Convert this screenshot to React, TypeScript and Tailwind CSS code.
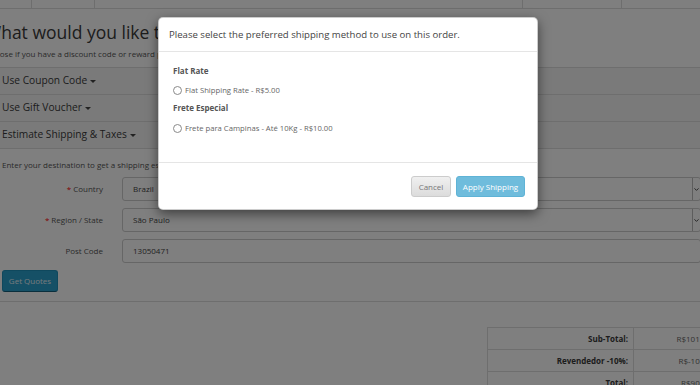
import { ChevronDown } from "lucide-react"

const topCells = [47, 63, 428, 99]

const panels = ["Use Coupon Code", "Use Gift Voucher", "Estimate Shipping & Taxes"]

const fields = [
  { label: "Country", required: true, value: "Brazil", select: true },
  { label: "Region / State", required: true, value: "São Paulo", select: true },
  { label: "Post Code", required: false, value: "13050471", select: false },
]

const totals = [
  { label: "Sub-Total:", value: "R$101.00" },
  { label: "Revendedor -10%:", value: "R$-10.10" },
  { label: "Total:", value: "R$90.90" },
]

const Caret = () => (
  <span className="ml-[3px] inline-block h-0 w-0 border-x-[3px] border-t-[3px] border-x-transparent border-t-[#444] align-middle" />
)

function Radio({ label }: { label: string }) {
  return (
    <label className="flex items-center gap-[3px] text-[7.7px] leading-[12px] text-[#666]">
      <span className="h-[9px] w-[9px] rounded-full border border-[#8a8a8a] bg-white" />
      {label}
    </label>
  )
}

export default function App() {
  return (
    <div className="relative h-[385px] w-[700px] overflow-hidden bg-white font-['Open_Sans',sans-serif] text-[#666]">
      <div className="-ml-[15px] w-[738px]">
        <div className="flex h-[9px] border-b border-[#ddd]">
          {topCells.map((w, i) => (
            <div key={i} style={{ width: w }} className="border-r border-[#ddd]" />
          ))}
        </div>

        <h2 className="mt-[13px] text-[17.5px] leading-[20px] text-[#3a3a3a]">What would you like to do next?</h2>
        <p className="mt-[7px] text-[8px] leading-[10px] text-[#555]">
          Choose if you have a discount code or reward points you want to use or would like to estimate your delivery cost.
        </p>

        <div className="mt-[8px] border-t border-[#ddd]">
          {panels.map((p) => (
            <div key={p} className="flex h-[27px] items-center border-b border-[#ddd] bg-[#f5f5f5] pl-[17px] text-[10.2px] text-[#3a3a3a]">
              {p}
              <Caret />
            </div>
          ))}
          <div className="border-b border-[#ddd] pb-[9px] pl-[17px] pt-[11px]">
            <p className="text-[8px] leading-[10px] text-[#555]">Enter your destination to get a shipping estimate.</p>
            <div className="mt-[7px] flex flex-col gap-[7px]">
              {fields.map((f) => (
                <div key={f.label} className="flex items-center">
                  <div className="w-[101px] text-right text-[8px] text-[#555]">
                    {f.required && <span className="mr-[2px] text-[#f00]">*</span>}
                    {f.label}
                  </div>
                  <div className="ml-[19px] flex h-[24px] w-[579px] items-center rounded-[3px] border border-[#ccc] bg-white pl-[10px] text-[8px] text-[#444]">
                    <span className="flex-1">{f.value}</span>
                    {f.select && (
                      <span className="flex h-full w-[8px] items-center justify-center border-l border-[#bbb]">
                        <ChevronDown size={7} strokeWidth={3} className="text-[#333]" />
                      </span>
                    )}
                  </div>
                </div>
              ))}
            </div>
            <button className="mt-[7px] h-[22px] w-[56px] rounded-[3px] border border-[#1f90bb] border-b-[#145e7a] bg-[#2aa0cc] text-[8px] text-[#e8f4fa]">
              Get Quotes
            </button>
          </div>
        </div>

        <div className="mt-[25px] flex justify-end">
          <div className="w-[236px] border-t border-l border-[#ddd] text-[8px]">
            {totals.map((t) => (
              <div key={t.label} className="flex h-[22px] border-b border-[#ddd]">
                <div className="flex w-[146px] items-center justify-end border-r border-[#ddd] pr-[5px] font-bold text-[#3a3a3a]">
                  {t.label}
                </div>
                <div className="flex flex-1 items-center justify-end pr-[12px]">{t.value}</div>
              </div>
            ))}
          </div>
        </div>
      </div>

      <div className="absolute inset-0 bg-black/50">
        <div className="ml-[158px] mt-[17px] w-[380px] rounded-[5px] border border-black/20 bg-white shadow-[0_4px_12px_rgba(0,0,0,0.5)]">
          <div className="border-b border-[#e5e5e5] px-[10px] py-[10px] text-[9.6px] leading-[13px] text-[#444]">
            Please select the preferred shipping method to use on this order.
          </div>
          <div className="px-[14px] pb-[28px] pt-[13px]">
            <p className="text-[8px] font-bold leading-[12px] text-[#555]">Flat Rate</p>
            <div className="mt-[7px]">
              <Radio label="Flat Shipping Rate - R$5.00" />
            </div>
            <p className="mt-[6px] text-[8px] font-bold leading-[12px] text-[#555]">Frete Especial</p>
            <div className="mt-[8px]">
              <Radio label="Frete para Campinas - Até 10Kg - R$10.00" />
            </div>
          </div>
          <div className="flex justify-end gap-[5px] border-t border-[#e5e5e5] pb-[12px] pr-[12px] pt-[13px]">
            <button className="h-[21px] w-[40px] rounded-[3px] border border-[#ccc] bg-gradient-to-b from-[#f0f0f0] to-[#dcdcdc] text-[8px] text-[#777]">
              Cancel
            </button>
            <button className="h-[21px] w-[69px] rounded-[3px] border border-[#5fb3d6] bg-[#6fbcdc] text-[8px] text-white">
              Apply Shipping
            </button>
          </div>
        </div>
      </div>
    </div>
  )
}
